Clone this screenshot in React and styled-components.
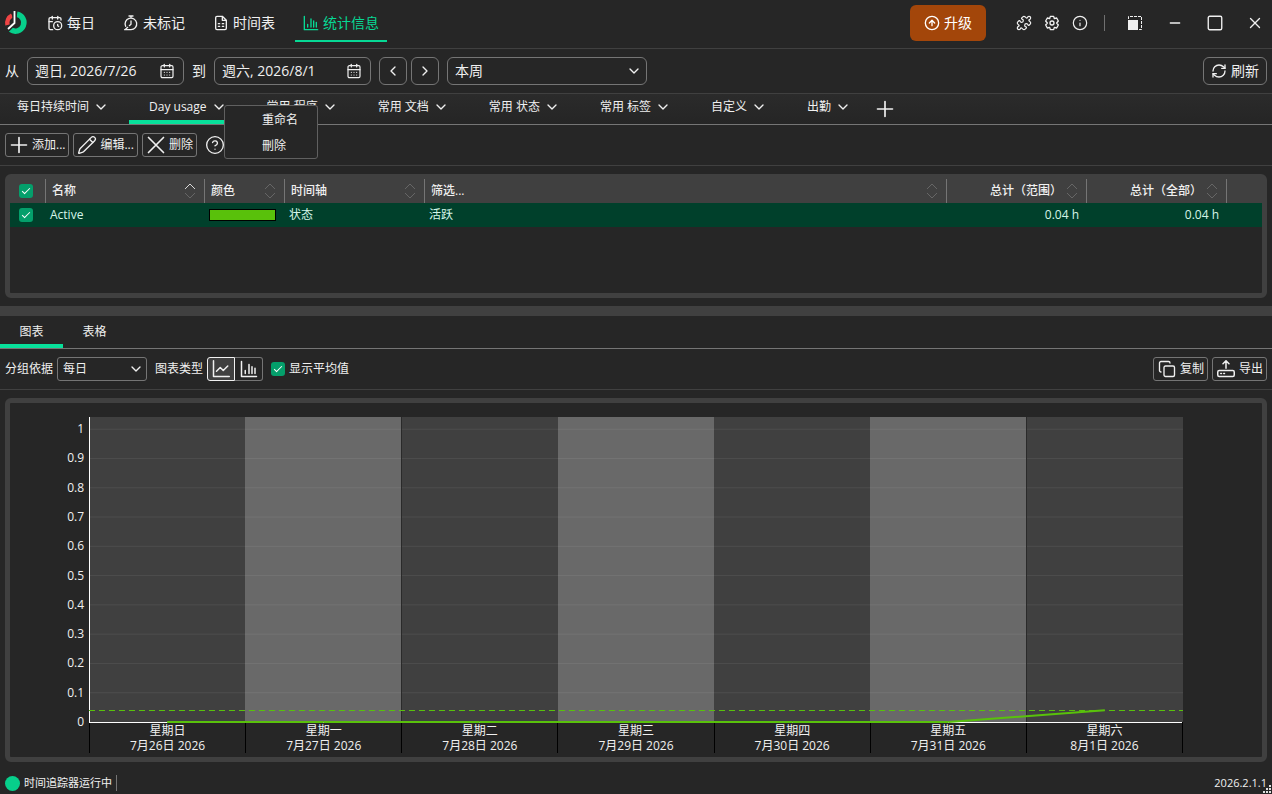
import React, { useState } from 'react';
import styled, { createGlobalStyle } from 'styled-components';
import {
  CalendarClock,
  CalendarDays,
  ChevronDown,
  ChevronLeft,
  ChevronRight,
  CircleArrowUp,
  CircleHelp,
  Copy,
  Info,
  Minus,
  Pencil,
  Puzzle,
  RefreshCw,
  Square,
  X,
} from 'lucide-react';

const GlobalStyle = createGlobalStyle`
  *, *::before, *::after {
    box-sizing: border-box;
  }
  body {
    margin: 0;
    background: #262626;
    color: #f0f0f0;
    font: 12px/16px 'Open Sans', 'Noto Sans CJK SC', sans-serif;
  }
  button, input, select {
    font: inherit;
    color: inherit;
  }
`;

const navItems = [
  { label: '每日', icon: 'daily' },
  { label: '未标记', icon: 'untagged' },
  { label: '时间表', icon: 'sheet' },
  { label: '统计信息', icon: 'stats', active: true },
];

const reportTabs = [
  { label: '每日持续时间' },
  { label: 'Day usage', active: true },
  { label: '常用 程序' },
  { label: '常用 文档' },
  { label: '常用 状态' },
  { label: '常用 标签' },
  { label: '自定义' },
  { label: '出勤' },
];

const days = [
  { name: '星期日', date: '7月26日 2026', value: 0 },
  { name: '星期一', date: '7月27日 2026', value: 0 },
  { name: '星期二', date: '7月28日 2026', value: 0 },
  { name: '星期三', date: '7月29日 2026', value: 0 },
  { name: '星期四', date: '7月30日 2026', value: 0 },
  { name: '星期五', date: '7月31日 2026', value: 0 },
  { name: '星期六', date: '8月1日 2026', value: 0.04 },
];

const ticks = [1, 0.9, 0.8, 0.7, 0.6, 0.5, 0.4, 0.3, 0.2, 0.1, 0];
const average = 0.04;

const valueY = value => `${100 - value * 96}%`;
const dayX = position => `${(position / days.length) * 100}%`;

const App = () => (
  <Page>
    <GlobalStyle />
    <TitleBar />
    <RangeBar />
    <ReportTabs />
    <ToolRow>
      <ToolButton><PlusIcon size={20} />添加...</ToolButton>
      <ToolButton><Pencil size={20} strokeWidth={1.6} />编辑...</ToolButton>
      <ToolButton><CrossIcon />删除</ToolButton>
      <HelpButton aria-label="?"><CircleHelp size={20} strokeWidth={1.6} /></HelpButton>
    </ToolRow>
    <TablePanel>
      <SeriesTable />
    </TablePanel>
    <Splitter />
    <ViewTabs>
      <ViewTab $active>图表</ViewTab>
      <ViewTab>表格</ViewTab>
    </ViewTabs>
    <ChartTools />
    <ChartPanel>
      <Chart />
    </ChartPanel>
    <StatusBar>
      <StatusDot />
      <StatusText>时间追踪器运行中</StatusText>
      <Version>2026.2.1.1</Version>
      <Grip />
    </StatusBar>
  </Page>
);

const TitleBar = () => (
  <Header>
    <Logo />
    <Nav>
      {navItems.map(item => (
        <NavLink href="#" key={item.label} $active={item.active}>
          <NavIcon name={item.icon} />
          {item.label}
        </NavLink>
      ))}
    </Nav>
    <Upgrade><CircleArrowUp size={16} />升级</Upgrade>
    <HeaderIcons>
      <IconButton><Puzzle size={16} strokeWidth={1.8} /></IconButton>
      <IconButton><GearIcon /></IconButton>
      <IconButton><Info size={16} strokeWidth={1.8} /></IconButton>
    </HeaderIcons>
    <WindowButtons>
      <IconButton><CompactIcon /></IconButton>
      <IconButton><Minus size={16} /></IconButton>
      <IconButton><Square size={18} strokeWidth={1.8} /></IconButton>
      <IconButton><X size={18} strokeWidth={1.8} /></IconButton>
    </WindowButtons>
  </Header>
);

const RangeBar = () => (
  <Range>
    <label htmlFor="from">从</label>
    <DateBox>
      <DateInput id="from" defaultValue="週日, 2026/7/26" />
      <CalendarDays size={16} strokeWidth={1.8} />
    </DateBox>
    <label htmlFor="to">到</label>
    <DateBox>
      <DateInput id="to" defaultValue="週六, 2026/8/1" />
      <CalendarDays size={16} strokeWidth={1.8} />
    </DateBox>
    <StepButton><ChevronLeft size={16} /></StepButton>
    <StepButton><ChevronRight size={16} /></StepButton>
    <SelectBox $large>
      <Select aria-label="本周"><option>本周</option></Select>
      <ChevronDown size={16} />
    </SelectBox>
    <Refresh><RefreshCw size={16} />刷新</Refresh>
  </Range>
);

const ReportTabs = () => (
  <TabRow>
    {reportTabs.map(tab => (
      <TabSlot key={tab.label}>
        <ReportTab $active={tab.active}>
          {tab.label}
          <ChevronDown size={16} />
        </ReportTab>
        {tab.active && (
          <Menu>
            <MenuItem>重命名</MenuItem>
            <MenuItem>刪除</MenuItem>
          </Menu>
        )}
      </TabSlot>
    ))}
    <AddTab><PlusIcon size={20} /></AddTab>
  </TabRow>
);

const SortMark = ({ ascending }) => (
  <SortSvg width="12" height="16" viewBox="0 0 12 16" fill="none">
    <path d="M1 6l5-5 5 5" stroke={ascending ? '#d8d8d8' : '#666'} />
    <path d="M1 10l5 5 5-5" stroke="#666" />
  </SortSvg>
);

const HeadCell = ({ children, ascending, right }) => (
  <Th>
    <HeadContent $right={right}>
      {children}
      <SortMark ascending={ascending} />
    </HeadContent>
  </Th>
);

const SeriesTable = () => (
  <Table>
    <colgroup>
      <Col $width={35} />
      <Col $width={159} />
      <Col $width={80} />
      <Col $width={140} />
      <col />
      <Col $width={140} />
      <Col $width={140} />
      <Col $width={36} />
    </colgroup>
    <thead>
      <tr>
        <Th $check><Check /></Th>
        <HeadCell ascending>名称</HeadCell>
        <HeadCell>颜色</HeadCell>
        <HeadCell>时间轴</HeadCell>
        <HeadCell>筛选...</HeadCell>
        <HeadCell right>总计（范围）</HeadCell>
        <HeadCell right>总计（全部）</HeadCell>
        <Th />
      </tr>
    </thead>
    <tbody>
      <Row>
        <Td $check><Check /></Td>
        <Td>Active</Td>
        <Td><Swatch /></Td>
        <Td>状态</Td>
        <Td>活跃</Td>
        <Td $right>0.04 h</Td>
        <Td $right>0.04 h</Td>
        <Td />
      </Row>
    </tbody>
  </Table>
);

const ChartTools = () => {
  const [type, setType] = useState('line');

  return (
    <ToolRow>
      <label htmlFor="group">分组依据</label>
      <SelectBox>
        <Select id="group"><option>每日</option></Select>
        <ChevronDown size={16} />
      </SelectBox>
      <TypeLabel>图表类型</TypeLabel>
      <Segment>
        <SegmentButton $active={type === 'line'} onClick={() => setType('line')}>
          <LineIcon />
        </SegmentButton>
        <SegmentButton $active={type === 'bar'} onClick={() => setType('bar')}>
          <BarsIcon size={18} />
        </SegmentButton>
      </Segment>
      <CheckLabel><Check />显示平均值</CheckLabel>
      <Spacer />
      <ToolButton><Copy size={18} strokeWidth={1.8} />复制</ToolButton>
      <ToolButton><ExportIcon />导出</ToolButton>
    </ToolRow>
  );
};

const Chart = () => (
  <ChartGrid>
    <AxisSvg>
      {ticks.map(tick => (
        <text x="100%" dx="-5" y={valueY(tick)} dy="4" textAnchor="end" key={tick}>{tick}</text>
      ))}
    </AxisSvg>
    <PlotSvg>
      {days.map((day, i) => (
        <rect
          key={day.date}
          x={dayX(i)}
          y="0"
          width={dayX(1)}
          height="100%"
          fill={i % 2 ? '#696969' : '#404040'}
          shapeRendering="crispEdges"
        />
      ))}
      {ticks.slice(0, -1).map(tick => (
        <line x1="0" x2="100%" y1={valueY(tick)} y2={valueY(tick)} stroke="#fff" strokeOpacity="0.07" key={tick} />
      ))}
      {[2, 6].map(i => (
        <line x1={dayX(i)} x2={dayX(i)} y1="0" y2="100%" stroke="#2a2a2a" shapeRendering="crispEdges" key={i} />
      ))}
      <line x1="0" x2="0" y1="0" y2="100%" stroke="#fff" shapeRendering="crispEdges" />
      <line x1="0" x2="100%" y1="100%" y2="100%" stroke="#fff" shapeRendering="crispEdges" />
      <line
        x1="0"
        x2="100%"
        y1={valueY(average)}
        y2={valueY(average)}
        stroke="#59c10b"
        strokeDasharray="6 4"
        shapeRendering="crispEdges"
      />
      {days.slice(1).map((day, i) => (
        <line
          key={day.date}
          x1={dayX(i + 0.5)}
          y1={valueY(days[i].value)}
          x2={dayX(i + 1.5)}
          y2={valueY(day.value)}
          stroke="#59c10b"
          strokeWidth="2"
        />
      ))}
    </PlotSvg>
    <DayLabels>
      {days.map(day => (
        <DayLabel key={day.date}>
          <span>{day.name}</span>
          <span>{day.date}</span>
        </DayLabel>
      ))}
    </DayLabels>
  </ChartGrid>
);

const Check = () => <CheckInput type="checkbox" defaultChecked />;

const Logo = () => (
  <svg width="24" height="28" viewBox="0 0 24 28" fill="none">
    <path d="M13 5.300a8.500 8.500 0 1 1-6.500 15.300" stroke="#07cf8b" strokeWidth="5.500" />
    <path d="M3.500 16a8.500 8.500 0 0 1 4.500-9.500" stroke="#ef4444" strokeWidth="4.500" />
    <path d="M10.500 1v13L4 20.500" stroke="#262626" strokeWidth="4.500" />
    <path d="M10.500 2v12L4 20" stroke="#fff" strokeWidth="1.800" />
  </svg>
);

const NavIcon = ({ name }) => {
  if (name === 'daily') return <CalendarClock size={16} />;
  if (name === 'stats') return <BarsIcon size={16} />;
  if (name === 'untagged') {
    return (
      <Icon>
        <path d="M9 1.500h6M12 1.500v3M12 9v5l-2.500 2M4 17a8.700 8.700 0 1 1 8 5H2.500M7 18.500L3 22" />
      </Icon>
    );
  }
  return (
    <Icon>
      <path d="M14 2H6a2 2 0 0 0-2 2v16a2 2 0 0 0 2 2h12a2 2 0 0 0 2-2V8zM14 2v6h6M8 13h2M14 13h2M8 17h2M14 17h2" />
    </Icon>
  );
};

const Icon = ({ size = 16, children }) => (
  <svg
    width={size}
    height={size}
    viewBox="0 0 24 24"
    fill="none"
    stroke="currentColor"
    strokeWidth="2"
    strokeLinecap="round"
    strokeLinejoin="round"
  >
    {children}
  </svg>
);

const PlusIcon = ({ size }) => (
  <Icon size={size}>
    <path d="M12 3v18M3 12h18" />
  </Icon>
);

const CrossIcon = () => (
  <Icon size={20}>
    <path d="M3 3l18 18M21 3L3 21" />
  </Icon>
);

const BarsIcon = ({ size }) => (
  <Icon size={size}>
    <path d="M2 2v20h20M7 18v-4M12 18V6M16 18V9M20 18v-7" />
  </Icon>
);

const LineIcon = () => (
  <Icon size={18}>
    <path d="M2 1v21h21M6 15l5-5 4 4 6-6" />
  </Icon>
);

const ExportIcon = () => (
  <Icon size={18}>
    <path d="M12 11V2M8 5l4-4 4 4M3 14h18a2 2 0 0 1 2 2v4a2 2 0 0 1-2 2H3a2 2 0 0 1-2-2v-4a2 2 0 0 1 2-2zM5 18h1M9 18h1" />
  </Icon>
);

const GearIcon = () => (
  <Icon>
    <path d="M9.500 2h5l1 3.500 3.500-1 2.500 4.500-2.500 3 2.500 3-2.500 4.500-3.500-1-1 3.500h-5l-1-3.500-3.500 1L2.500 15 5 12 2.500 9 5 4.500l3.500 1z" />
    <circle cx="12" cy="12" r="3" />
  </Icon>
);

const CompactIcon = () => (
  <svg width="16" height="16" viewBox="0 0 16 16" fill="none">
    <rect x="1" y="5" width="10" height="10" fill="#f0f0f0" />
    <path d="M1.500 4V1.500h13v13H12" stroke="#f0f0f0" strokeDasharray="3 1" />
  </svg>
);

const Grip = () => (
  <GripSvg width="9" height="9" viewBox="0 0 9 9" fill="#e0e0e0">
    <path d="M6 0h2v2H6zM3 3h2v2H3zM6 3h2v2H6zM0 6h2v2H0zM3 6h2v2H3zM6 6h2v2H6z" />
  </GripSvg>
);

const Page = styled.div`
  position: relative;
  display: flex;
  flex-direction: column;
  min-height: 100vh;
  svg {
    flex-shrink: 0;
  }
`;

const Header = styled.header`
  display: flex;
  align-items: center;
  height: 49px;
  padding: 0 9px 3px 4px;
  border-bottom: 1px solid #404040;
`;

const Nav = styled.nav`
  display: flex;
  gap: 12px;
  margin-left: 11px;
  flex: 1;
`;

const NavLink = styled.a`
  display: flex;
  align-items: center;
  gap: 4px;
  height: 38px;
  padding: 2px 8px 0;
  font-size: 14px;
  text-decoration: none;
  color: ${({ $active }) => ($active ? '#07d995' : '#f0f0f0')};
  border-bottom: 2px solid ${({ $active }) => ($active ? '#07d995' : 'transparent')};
`;

const Upgrade = styled.button`
  display: flex;
  align-items: center;
  gap: 4px;
  height: 36px;
  padding: 0 14px;
  border: none;
  border-radius: 6px;
  background: #a3460a;
  color: #fff;
  font-size: 14px;
`;

const HeaderIcons = styled.div`
  display: flex;
  gap: 12px;
  margin-left: 30px;
  padding-right: 16px;
  border-right: 1px solid #707070;
`;

const WindowButtons = styled.div`
  display: flex;
  align-items: center;
  gap: 24px;
  margin-left: 22px;
`;

const IconButton = styled.button`
  display: flex;
  justify-content: center;
  width: 16px;
  padding: 0;
  border: none;
  background: none;
`;

const Range = styled.div`
  display: flex;
  align-items: center;
  gap: 8px;
  height: 45px;
  padding: 0 5px;
  border-bottom: 1px solid #404040;
  font-size: 14px;
`;

const DateBox = styled.div`
  display: flex;
  align-items: center;
  width: 157px;
  height: 28px;
  padding: 0 8px 0 7px;
  border: 1px solid #757575;
  border-radius: 6px;
`;

const DateInput = styled.input`
  flex: 1;
  min-width: 0;
  padding: 0;
  border: none;
  outline: none;
  background: none;
`;

const StepButton = styled.button`
  display: flex;
  align-items: center;
  justify-content: center;
  width: 28px;
  height: 28px;
  padding: 0;
  border: 1px solid #757575;
  border-radius: 6px;
  background: none;
  & + & {
    margin-left: -4px;
  }
`;

const Select = styled.select`
  appearance: none;
  width: 100%;
  height: 100%;
  padding: 0 5px;
  border: none;
  background: transparent;
`;

const SelectBox = styled.div`
  position: relative;
  width: ${({ $large }) => ($large ? 200 : 90)}px;
  height: ${({ $large }) => ($large ? 28 : 24)}px;
  border: 1px solid #757575;
  border-radius: ${({ $large }) => ($large ? 6 : 3)}px;
  ${Select} {
    padding-left: ${({ $large }) => ($large ? 7 : 5)}px;
  }
  svg {
    position: absolute;
    right: ${({ $large }) => ($large ? 4 : 2)}px;
    top: calc(50% - 8px);
    pointer-events: none;
  }
`;

const Refresh = styled.button`
  display: flex;
  align-items: center;
  gap: 4px;
  height: 28px;
  margin-left: auto;
  padding: 0 7px;
  border: 1px solid #757575;
  border-radius: 6px;
  background: none;
`;

const TabRow = styled.div`
  display: flex;
  height: 31px;
  background: linear-gradient(#2b2b2b, #252525);
  border-bottom: 1px solid #757575;
`;

const ReportTab = styled.button`
  display: flex;
  align-items: center;
  gap: 4px;
  height: 100%;
  padding: 0 20px;
  border: none;
  border-bottom: 4px solid ${({ $active }) => ($active ? '#07e09a' : 'transparent')};
  background: none;
  white-space: nowrap;
`;

const TabSlot = styled.div`
  position: relative;
  &:first-child ${ReportTab} {
    padding-left: 17px;
  }
`;

const Menu = styled.div`
  position: absolute;
  z-index: 1;
  top: 11px;
  left: 95px;
  width: 94px;
  border: 1px solid #606060;
  border-radius: 3px;
  background: #262626;
`;

const MenuItem = styled.button`
  display: block;
  width: 100%;
  height: 26px;
  padding: 2px 0 0 37px;
  border: none;
  background: none;
  text-align: left;
`;

const AddTab = styled(IconButton)`
  width: 20px;
  align-items: center;
  margin-left: 4px;
`;

const ToolRow = styled.div`
  display: flex;
  align-items: center;
  gap: 4px;
  height: 41px;
  padding: 0 5px;
  border-bottom: 1px solid #404040;
`;

const ToolButton = styled.button`
  display: flex;
  align-items: center;
  gap: 3px;
  height: 24px;
  padding: 0 3px;
  border: 1px solid #757575;
  border-radius: 3px;
  background: none;
  svg {
    width: 20px;
  }
`;

const HelpButton = styled(IconButton)`
  width: 20px;
  margin-left: 4px;
`;

const TablePanel = styled.section`
  height: 124px;
  margin: 8px 5px;
  border: 5px solid #404040;
  border-radius: 6px;
`;

const Table = styled.table`
  width: 100%;
  table-layout: fixed;
  border-collapse: separate;
  border-spacing: 0;
`;

const Col = styled.col`
  width: ${({ $width }) => $width}px;
`;

const Th = styled.th`
  height: 24px;
  padding: ${({ $check }) => ($check ? '0 0 0 9px' : '0 8px 0 6px')};
  background: #404040;
  border-left: ${({ $check }) => ($check ? 'none' : '1px solid #757575')};
  font-weight: 500;
  text-align: left;
`;

const HeadContent = styled.div`
  display: flex;
  align-items: center;
  justify-content: ${({ $right }) => ($right ? 'flex-end' : 'space-between')};
`;

const SortSvg = styled.svg`
  margin-left: 4px;
`;

const Row = styled.tr`
  background: #00402b;
  color: #d5f5e8;
`;

const Td = styled.td`
  height: 24px;
  padding: ${({ $check }) => ($check ? '0 0 0 9px' : '0 7px 0 5px')};
  text-align: ${({ $right }) => ($right ? 'right' : 'left')};
`;

const Swatch = styled.div`
  height: 12px;
  width: 67px;
  border: 1px solid #000;
  background: #59c10b;
`;

const CheckInput = styled.input`
  appearance: none;
  display: block;
  width: 14px;
  height: 14px;
  margin: 0;
  border-radius: 3px;
  background: #049f6b;
  &:checked::before {
    content: '';
    display: block;
    width: 8px;
    height: 4px;
    margin: 4px 3px;
    border: solid #fff;
    border-width: 0 0 1px 1px;
    transform: rotate(-45deg);
  }
`;

const Splitter = styled.div`
  height: 10px;
  background: #404040;
`;

const ViewTabs = styled.div`
  display: flex;
  height: 33px;
  border-bottom: 1px solid #757575;
`;

const ViewTab = styled.button`
  width: 63px;
  padding: 3px 0 0;
  border: none;
  border-bottom: 4px solid ${({ $active }) => ($active ? '#07e09a' : 'transparent')};
  background: none;
`;

const TypeLabel = styled.span`
  margin-left: 4px;
`;

const Segment = styled.div`
  display: flex;
  height: 24px;
`;

const SegmentButton = styled.button`
  display: flex;
  align-items: center;
  justify-content: center;
  width: 28px;
  padding: 0;
  border: 1px solid ${({ $active }) => ($active ? '#f0f0f0' : '#757575')};
  background: ${({ $active }) => ($active ? '#404040' : 'none')};
  &:first-child {
    border-radius: 3px 0 0 3px;
  }
  &:last-child {
    border-left: none;
    border-radius: 0 3px 3px 0;
  }
`;

const CheckLabel = styled.label`
  display: flex;
  align-items: center;
  gap: 4px;
  margin-left: 4px;
`;

const Spacer = styled.div`
  flex: 1;
`;

const ChartPanel = styled.section`
  display: flex;
  flex: 1;
  min-height: 240px;
  margin: 8px 5px 0;
  border: 5px solid #404040;
  border-radius: 6px;
`;

const ChartGrid = styled.div`
  display: grid;
  flex: 1;
  grid-template: 1fr 31px / 79px 1fr 79px;
  padding: 14px 0 4px;
`;

const AxisSvg = styled.svg`
  width: 100%;
  height: 100%;
  overflow: visible;
  fill: #f0f0f0;
`;

const PlotSvg = styled.svg`
  width: 100%;
  height: 100%;
  overflow: visible;
`;

const DayLabels = styled.div`
  grid-column: 2;
  display: grid;
  grid-template-columns: repeat(7, 1fr);
  border-right: 1px solid #000;
`;

const DayLabel = styled.div`
  display: flex;
  flex-direction: column;
  align-items: center;
  margin-top: 1px;
  border-left: 1px solid #000;
  line-height: 15px;
`;

const StatusBar = styled.footer`
  display: flex;
  align-items: center;
  height: 32px;
  padding: 10px 5px 0;
`;

const StatusDot = styled.span`
  width: 15px;
  height: 15px;
  border-radius: 50%;
  background: #07cf8b;
`;

const StatusText = styled.span`
  margin-left: 4px;
  padding-right: 4px;
  border-right: 1px solid #757575;
  font-size: 11px;
`;

const Version = styled.span`
  margin-left: auto;
  font-size: 11px;
`;

const GripSvg = styled.svg`
  position: absolute;
  right: 0;
  bottom: 0;
`;

export default App;
